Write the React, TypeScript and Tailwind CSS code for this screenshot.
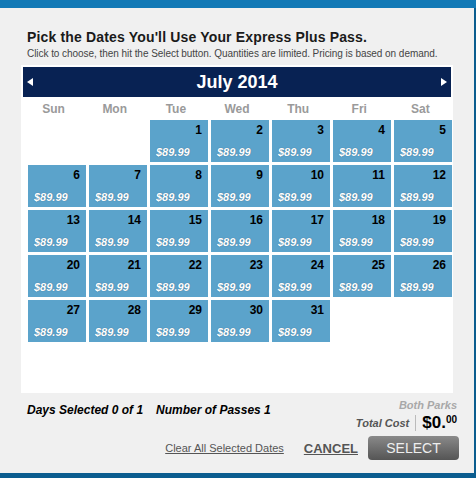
const DAYS = ["Sun", "Mon", "Tue", "Wed", "Thu", "Fri", "Sat"];

// July 2014 starts on a Tuesday
const LEAD = 2;
const TOTAL_DAYS = 31;

function DayCell({ day }: { day: number }) {
  return (
    <div className="flex h-[42px] flex-col justify-between bg-[#5ba3cb] px-[6px] pt-[4px] pb-[3px]">
      <div className="text-right text-[12px] leading-[13px] font-bold text-black">{day}</div>
      <div className="text-[11px] leading-[13px] font-bold italic text-white [text-shadow:0_0_1px_rgba(30,60,90,0.6)]">
        $89.99
      </div>
    </div>
  );
}

export default function App() {
  const cells: (number | null)[] = [];
  for (let i = 0; i < LEAD; i++) cells.push(null);
  for (let d = 1; d <= TOTAL_DAYS; d++) cells.push(d);

  return (
    <div
      className="flex h-[478px] w-[476px] flex-col bg-[#f0f0f0] text-[#222]"
      style={{ fontFamily: '"Liberation Sans", Arial, sans-serif' }}
    >
      <div className="h-[8px] bg-[#1279b6]" />

      <div className="flex flex-1 flex-col border-r-2 border-[#0b5d8f] pl-[21px] pr-[21px]">
        {/* Heading */}
        <div className="pt-[21px] pl-[6px]">
          <h1 className="text-[14px] leading-[16px] font-bold tracking-[0.16px] text-[#1a1a1a]">
            Pick the Dates You'll Use Your Express Plus Pass.
          </h1>
          <p className="mt-[2px] whitespace-nowrap text-[10px] leading-[13px] tracking-[-0.05px] text-[#444]">
            Click to choose, then hit the Select button. Quantities are limited. Pricing is based on demand.
          </p>
        </div>

        {/* Calendar */}
        <div className="mt-[5px] h-[328px] w-[432px] bg-white p-[2px]">
          <div className="flex h-[30px] items-center justify-between bg-[#082253] px-[4px] text-white">
            <svg width="6" height="8" viewBox="0 0 6 8">
              <path d="M0 4 L6 0 L6 8 Z" fill="white" />
            </svg>
            <span className="text-[18px] leading-[20px] font-bold">July 2014</span>
            <svg width="6" height="8" viewBox="0 0 6 8">
              <path d="M6 4 L0 0 L0 8 Z" fill="white" />
            </svg>
          </div>

          <div className="grid h-[23px] grid-cols-7 items-center text-center text-[12px] font-bold text-[#9a9a9a]">
            {DAYS.map((d) => (
              <span key={d}>{d}</span>
            ))}
          </div>

          <div className="ml-[5px] grid grid-cols-[repeat(7,58px)] gap-[3px]">
            {cells.map((d, i) =>
              d === null ? <div key={i} className="h-[42px]" /> : <DayCell key={i} day={d} />
            )}
          </div>
        </div>

        {/* Summary */}
        <div className="flex items-start justify-between pl-[6px]">
          <div className="mt-[10px] text-[12px] leading-[14px] font-bold italic text-black">
            Days Selected 0 of 1<span className="ml-[13px]">Number of Passes 1</span>
          </div>
          <div className="mr-[-4px] flex flex-col items-end pt-[6px]">
            <span className="text-[11px] leading-[13px] font-bold italic text-[#a8a8a8]">Both Parks</span>
            <div className="mt-[2px] flex items-center">
              <span className="text-[11px] font-bold italic text-[#555]">Total Cost</span>
              <span className="mx-[6px] h-[16px] w-px bg-[#bbb]" />
              <span className="text-[17px] leading-[18px] font-bold text-black">
                $0.<sup className="text-[10px] font-bold">00</sup>
              </span>
            </div>
          </div>
        </div>

        <div className="mt-[4px] flex items-center justify-end">
          <a className="text-[11px] text-[#555] underline">Clear All Selected Dates</a>
          <a className="ml-[20px] mt-[2px] text-[13px] font-bold text-[#555] underline">CANCEL</a>
          <button className="mr-[-6px] ml-[10px] h-[24px] w-[91px] rounded-[4px] bg-gradient-to-b from-[#8a8a8a] to-[#555] text-[14px] leading-[24px] text-[#eee]">
            SELECT
          </button>
        </div>
      </div>

      <div className="h-[5px] bg-[#0b5d8f]" />
    </div>
  );
}
